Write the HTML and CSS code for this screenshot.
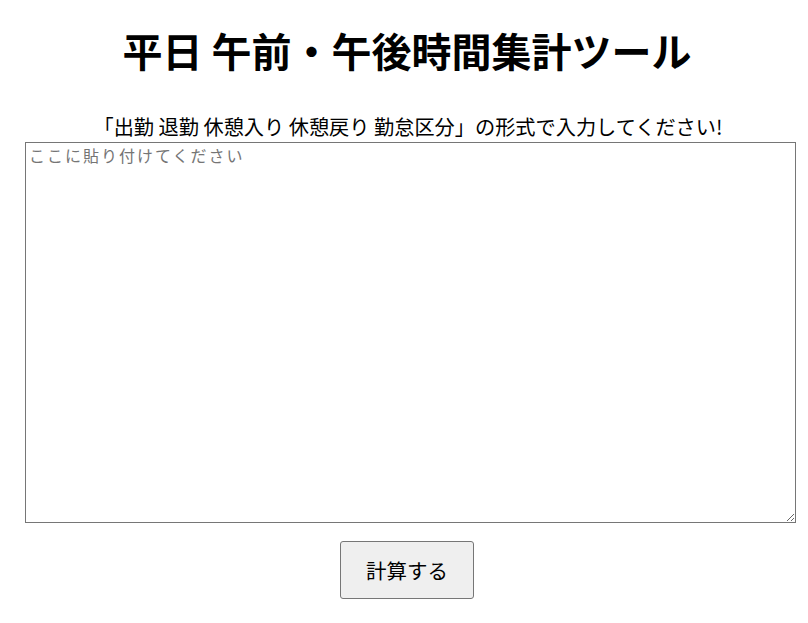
FILE: index.html
```html
<!DOCTYPE html>
<html lang="ja">
<head>
  <meta charset="UTF-8">
  <title>平日 午前・午後時間集計ツール</title>
  <link rel="stylesheet" href="styles.css">
</head>
<body>
  <div class="container">
    <h1>平日 午前・午後時間集計ツール</h1>
    <p class="hint">「出勤 退勤 休憩入り 休憩戻り 勤怠区分」の形式で入力してください!</p>
    <textarea id="input" placeholder="ここに貼り付けてください"></textarea>
    <div class="actions">
      <button class="calc">計算する</button>
    </div>
  </div>
</body>
</html>
```

FILE: styles.css
```css
body {
  margin: 0;
  font-family: "Noto Sans CJK JP", "Noto Sans", sans-serif;
  color: #000;
  background: #fff;
}
.container {
  padding: 0 13px 0 25px;
}
h1 {
  font-size: 40px;
  line-height: 58px;
  font-weight: bold;
  text-align: center;
  margin: 21px 0 34px 0;
  padding-right: 6px;
}
.hint {
  font-size: 20.2px;
  line-height: 28px;
  text-align: center;
  margin: 0 4px 1px 0;
}
textarea {
  display: block;
  box-sizing: border-box;
  width: 771px;
  height: 381px;
  margin: 0;
  padding: 2px 3px;
  border: 1px solid #767676;
  border-radius: 0;
  font-family: "Noto Sans CJK JP", monospace;
  font-size: 16px;
  letter-spacing: 2px;
  line-height: 20px;
}
textarea::placeholder {
  color: #757575;
}
.actions {
  text-align: center;
  margin-top: 18px;
  padding-right: 6px;
}
.calc {
  width: 134px;
  height: 58px;
  font-family: "Noto Sans CJK JP", sans-serif;
  font-size: 20.5px;
  background: #efefef;
  border: 1px solid #767676;
  border-radius: 3px;
  color: #000;
  cursor: pointer;
}
.calc:hover {
  background: #e5e5e5;
}
```
